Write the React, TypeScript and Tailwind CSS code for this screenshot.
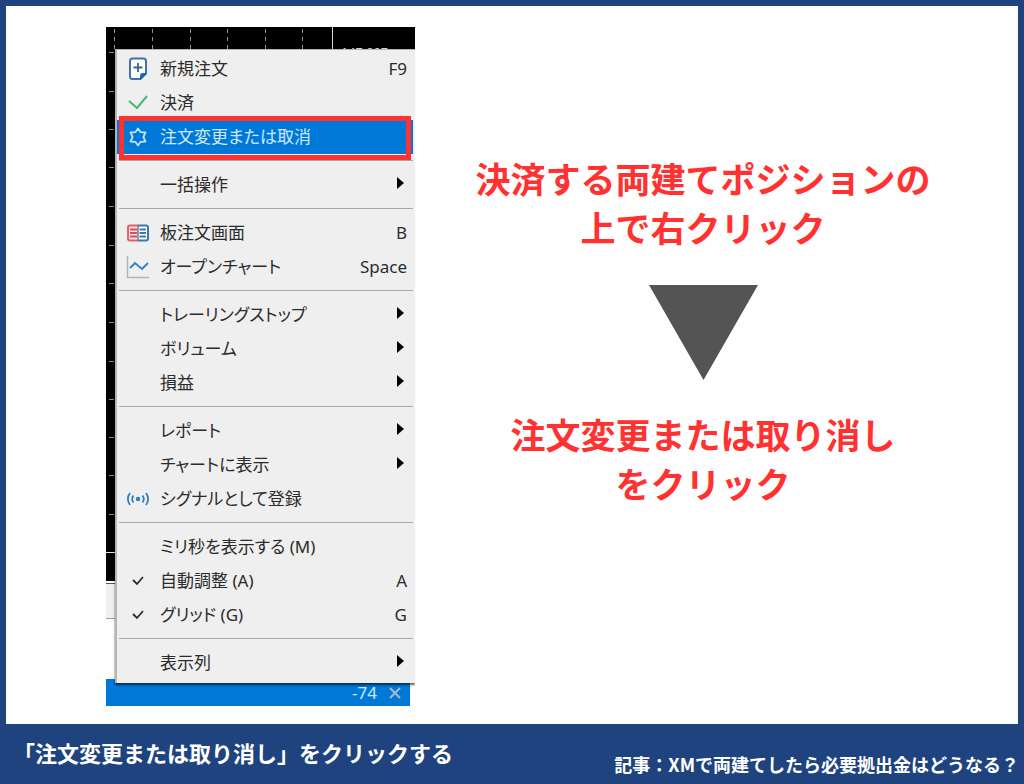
import React from 'react';

type MenuItem = {
  label: string;
  icon?: React.ReactNode;
  shortcut?: string;
  submenu?: boolean;
  active?: boolean;
};

const NewOrderIcon = () => (
  <svg width="24" height="26" viewBox="0 0 24 26" fill="none">
    <path d="M6.5 2.5h11A2.5 2.5 0 0 1 20 5v12.5L14.5 23h-8A2.5 2.5 0 0 1 4 20.5V5a2.5 2.500 0 0 1 2.5-2.5z" fill="#fff" stroke="#4272a8" strokeWidth="2" />
    <path d="M20.5 17.5l-6 6v-4a2 2 0 0 1 2-2z" fill="#1b67a8" stroke="#1b67a8" />
    <path d="M12 7v9M7.5 11.5h9" stroke="#38648f" strokeWidth="1.8" />
  </svg>
);

const CloseOrderIcon = () => (
  <svg width="24" height="24" viewBox="0 0 24 24" fill="none">
    <path d="M3 10l8 7L21 5" stroke="#4cb870" strokeWidth="2" />
  </svg>
);

const GearIcon = () => (
  <svg width="24" height="24" viewBox="0 0 24 24" fill="none">
    <path d="M12 3.500l2.600 3.700 4.900.3L17.400 12l2.100 4.500-4.900.3L12 20.500l-2.600-3.700-4.900-.3L6.600 12 4.500 7.500l4.900-.3z" stroke="#bfe3f5" strokeWidth="1.800" strokeLinejoin="round" />
  </svg>
);

const DepthIcon = () => (
  <svg width="24" height="24" viewBox="0 0 24 24" fill="none">
    <path d="M12 4.5H4a2 2 0 0 0-2 2v11a2 2 0 0 0 2 2h8" fill="#fbe3e3" stroke="#e3606a" strokeWidth="2" />
    <path d="M12 4.5h8a2 2 0 0 1 2 2v11a2 2 0 0 1-2 2h-8" fill="#fff" stroke="#3a78b0" strokeWidth="2" />
    <path d="M12 4v16" stroke="#6b7f98" strokeWidth="1.5" />
    <path d="M4 8.5h7M4 12h7M4 15.5h7" stroke="#d94f5c" strokeWidth="1.8" />
    <path d="M13.5 8.5H20M13.5 12H20M13.5 15.5H20" stroke="#3a78b0" strokeWidth="1.8" />
  </svg>
);

const ChartIcon = () => (
  <svg width="24" height="24" viewBox="0 0 24 24" fill="none">
    <path d="M1.5 1v21.5H23" stroke="#b0b4b8" strokeWidth="1.5" />
    <path d="M4 13l5-5 7 6 6-6" stroke="#3583c2" strokeWidth="2" />
  </svg>
);

const SignalIcon = () => (
  <svg width="24" height="24" viewBox="0 0 24 24" fill="none" stroke="#2f7fbf" strokeWidth="1.8">
    <circle cx="12" cy="12" r="2.2" fill="#2f7fbf" stroke="none" />
    <path d="M4 6c-2.8 3.5-2.8 8.5 0 12M7.5 8.5c-1.5 2-1.5 5 0 7M20 6c2.8 3.5 2.8 8.5 0 12M16.5 8.5c1.5 2 1.5 5 0 7" />
  </svg>
);

const TickIcon = () => (
  <svg width="24" height="24" viewBox="0 0 24 24" fill="none">
    <path d="M7 11l4 4 6-7" stroke="#2b2b2b" strokeWidth="1.8" />
  </svg>
);

const groups: MenuItem[][] = [
  [
    { label: '新規注文', icon: <NewOrderIcon />, shortcut: 'F9' },
    { label: '決済', icon: <CloseOrderIcon /> },
    { label: '注文変更または取消', icon: <GearIcon />, active: true },
  ],
  [{ label: '一括操作', submenu: true }],
  [
    { label: '板注文画面', icon: <DepthIcon />, shortcut: 'B' },
    { label: 'オープンチャート', icon: <ChartIcon />, shortcut: 'Space' },
  ],
  [
    { label: 'トレーリングストップ', submenu: true },
    { label: 'ボリューム', submenu: true },
    { label: '損益', submenu: true },
  ],
  [
    { label: 'レポート', submenu: true },
    { label: 'チャートに表示', submenu: true },
    { label: 'シグナルとして登録', icon: <SignalIcon /> },
  ],
  [
    { label: 'ミリ秒を表示する (M)' },
    { label: '自動調整 (A)', icon: <TickIcon />, shortcut: 'A' },
    { label: 'グリッド (G)', icon: <TickIcon />, shortcut: 'G' },
  ],
  [{ label: '表示列', submenu: true }],
];

const gridColumns = [8, 46, 84, 121, 159, 196];
const gridRows = [25, 64, 102, 140, 179, 218, 256, 295, 334, 372, 410, 448, 487];

const ChartBackdrop = () => (
  <svg className="absolute inset-0" width="309" height="660" viewBox="0 0 309 660" aria-hidden="true">
    <rect width="309" height="554" fill="#000" />
    {gridColumns.map(x => (
      <path key={x} d={`M${x}.5 2v22`} stroke="#8f8f8f" strokeDasharray="4 4" />
    ))}
    {gridRows.map(y => (
      <path key={y} d={`M3 ${y}.5h5`} stroke="#8f8f8f" />
    ))}
    <path d="M226.5 0v24" stroke="#d4d4d4" />
    <text x="235" y="30" fill="#d4d4d4" fontSize="13" fontFamily="Liberation Sans">147.337</text>
    <path d="M0 525.5h12" stroke="#e5e5e5" />
    <path d="M0 556.5h12" stroke="#555" />
    <rect y="557" width="12" height="34" fill="#f0f0f0" />
    <path d="M0 591.5h12" stroke="#a0a0a0" />
  </svg>
);

const MenuRow = ({ item }: { item: MenuItem }) => (
  <li className="relative">
    <button
      className={`flex h-[34px] w-full items-center pl-[9px] pr-[6px] text-left ${item.active ? 'bg-[#0078d7] text-[#cfeafa]' : 'text-[#2b2b2b]'}`}
    >
      <span className="flex w-6 shrink-0 justify-center">{item.icon}</span>
      <span className="ml-[10px] flex-1 whitespace-nowrap">{item.label}</span>
      {item.shortcut && <span>{item.shortcut}</span>}
      {item.submenu && (
        <svg className="mb-1 mr-[3px]" width="7" height="12" viewBox="0 0 7 12">
          <path d="M0 0l7 6-7 6z" fill="#000" />
        </svg>
      )}
    </button>
    {item.active && <span className="pointer-events-none absolute -top-1 -bottom-[6px] left-[2px] right-[2px] border-[5px] border-[#ff3131]" />}
  </li>
);

const ContextMenu = () => (
  <nav className="relative z-10 ml-[9px] mt-[22px] border-l-2 border-t border-[#b5b5b5] bg-[#efefef] pb-[3px] pt-[2px] shadow-[0_2px_2px_rgba(0,0,0,0.6)]">
    {groups.map((group, i) => (
      <React.Fragment key={i}>
        {i > 0 && <hr className="mx-[2px] mb-[7px] mt-[6px] border-[#a8a8a8]" />}
        <ul className="pr-[2px]">
          {group.map(item => <MenuRow key={item.label} item={item} />)}
        </ul>
      </React.Fragment>
    ))}
  </nav>
);

export default function App() {
  return (
    <div className="flex min-h-screen flex-col bg-[#1e437f] font-['Noto_Sans_CJK_JP',sans-serif]">
      <main className="mx-[6px] mt-[6px] flex flex-1 items-start bg-[#fefefe]">
        <section className="relative mb-[18px] ml-[100px] mt-[21px] w-[309px] shrink-0 overflow-hidden font-['Noto_Sans','Noto_Sans_CJK_JP',sans-serif] text-[17px] leading-6 [font-feature-settings:'palt']">
          <ChartBackdrop />
          <ContextMenu />
          <div className="relative -mt-1 mr-[5px] flex h-[27px] items-center justify-end gap-3 bg-[#0078d7] pr-[9px] text-[#cfeafa]">
            <span>-74</span>
            <button aria-label="閉じる">
              <svg width="12" height="12" viewBox="0 0 12 12">
                <path d="M1 1l10 10M11 1L1 11" stroke="#a9b8c6" strokeWidth="2" />
              </svg>
            </button>
          </div>
        </section>

        <section className="flex flex-1 flex-col items-center pr-[27px] pt-[147px] text-center text-[35px] font-bold leading-[49px] text-[#ff3131]">
          <h1>
            決済する両建てポジションの
            <br />
            上で右クリック
          </h1>
          <svg className="mb-[29px] mt-[34px]" width="109" height="95" viewBox="0 0 109 95" aria-hidden="true">
            <path d="M0 0h109L54.5 95z" fill="#545454" />
          </svg>
          <h2>
            注文変更または取り消し
            <br />
            をクリック
          </h2>
        </section>
      </main>

      <footer className="flex h-[60px] items-center justify-between pl-[13px] pr-[5px] font-bold text-white">
        <p className="pb-1 text-[22px]">「注文変更または取り消し」をクリックする</p>
        <p className="pt-5 text-[18px]">記事：XMで両建てしたら必要拠出金はどうなる？</p>
      </footer>
    </div>
  );
}
